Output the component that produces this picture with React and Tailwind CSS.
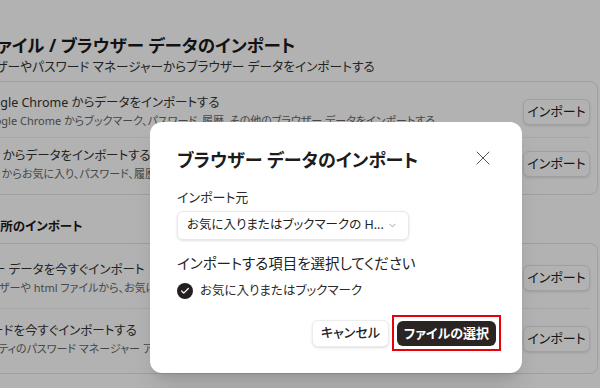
import React from 'react'
import { X, ChevronDown, Check } from 'lucide-react'

const rows1 = [
  {
    title: 'Google Chrome からデータをインポートする',
    sub: 'Google Chrome からブックマーク、パスワード、履歴、その他のブラウザー データをインポートする',
    tOff: '',
    sOff: 'ml-[4px]',
  },
  {
    title: 'Edge からデータをインポートする',
    sub: 'Edge からお気に入り、パスワード、履歴、Cookie、その他のブラウザー データをインポートする',
    tOff: '-ml-[6px]',
    sOff: '-ml-[3px]',
  },
]

const rows2 = [
  {
    title: 'ブラウザー データを今すぐインポート',
    sub: 'ブラウザーや html ファイルから、お気に入りまたはブックマークをインポートする',
    tOff: '-ml-[28px]',
    sOff: '-ml-[6px]',
  },
  {
    title: 'パスワードを今すぐインポートする',
    sub: 'サードパーティのパスワード マネージャー アプリからパスワードをインポートする',
    tOff: '-ml-[19px]',
    sOff: '-ml-[29px]',
  },
]

function Row({ row, h }) {
  return (
    <div className={`flex items-center justify-between ${h}`}>
      <div className="flex flex-col min-w-0">
        <div className={`text-[12.5px] leading-[18px] text-[#333] whitespace-nowrap ${row.tOff}`}>{row.title}</div>
        <div className={`text-[11px] leading-[17px] text-[#666] whitespace-nowrap ${row.sOff}`}>{row.sub}</div>
      </div>
      <button className="shrink-0 w-[67px] h-[26px] rounded-md border border-[#e6e6e6] bg-white shadow-sm text-[13px] text-[#222]">
        インポート
      </button>
    </div>
  )
}

export default function App() {
  return (
    <div className="relative w-[600px] h-[388px] overflow-hidden bg-white font-['Noto_Sans','Noto_Sans_CJK_JP',sans-serif] [font-feature-settings:'palt']">
      {/* settings page behind */}
      <div className="-ml-[39px] w-[637px] pt-[33px]">
        <h1 className="ml-[21px] text-[17.5px] leading-[24px] font-bold text-[#1a1a1a] whitespace-nowrap">
          ファイル / ブラウザー データのインポート
        </h1>
        <p className="ml-[1px] text-[12.7px] leading-[18px] text-[#333] whitespace-nowrap">
          ブラウザーやパスワード マネージャーからブラウザー データをインポートする
        </p>
        <div className="mt-[6px] rounded-lg border border-[#e4e4e4] bg-white py-[4px] pl-[14px] pr-[7px]">
          <Row row={rows1[0]} h="h-[52px] border-b border-[#f0f0f0]" />
          <Row row={rows1[1]} h="h-[52px]" />
        </div>
        <h2 className="mt-[23px] ml-[2px] text-[12.5px] leading-[18px] font-bold text-[#1a1a1a] whitespace-nowrap">
          他の場所のインポート
        </h2>
        <div className="mt-[7px] rounded-lg border border-[#e4e4e4] bg-white py-[4px] pl-[14px] pr-[7px]">
          <Row row={rows2[0]} h="h-[61px] border-b border-[#f0f0f0]" />
          <Row row={rows2[1]} h="h-[60px]" />
        </div>
      </div>

      {/* overlay */}
      <div className="absolute inset-0 bg-black/30" />

      {/* dialog */}
      <div className="absolute left-[150px] top-[122px] w-[372px] rounded-xl bg-white shadow-xl px-[27px] pt-[26px] pb-[26px]">
        <div className="flex items-center justify-between">
          <h3 className="text-[18px] leading-[24px] font-bold text-[#1c1c1c]">ブラウザー データのインポート</h3>
          <button className="-mt-[4px] text-[#555]">
            <X size={24} strokeWidth={1} />
          </button>
        </div>
        <div className="mt-[15px] text-[13px] leading-[20px] text-[#2a2a2a]">インポート元</div>
        <div className="mt-[4px] flex items-center justify-between w-[232px] h-[29px] rounded-md border border-[#e8e8e8] shadow-sm pl-[9px] pr-[10px]">
          <span className="text-[12.5px] text-[#222] whitespace-nowrap">お気に入りまたはブックマークの H...</span>
          <ChevronDown size={11} strokeWidth={1.5} className="text-[#777]" />
        </div>
        <div className="mt-[12px] text-[14.5px] leading-[22px] text-[#222]">インポートする項目を選択してください</div>
        <div className="mt-[8px] flex items-center gap-[7px]">
          <span className="flex items-center justify-center w-[16px] h-[16px] rounded-full bg-[#231f1e]">
            <Check size={10} strokeWidth={3} className="text-white" />
          </span>
          <span className="text-[12.5px] leading-[18px] text-[#2a2a2a]">お気に入りまたはブックマーク</span>
        </div>
        <div className="mt-[19px] flex items-center justify-end gap-[3px]">
          <button className="w-[77px] h-[27px] rounded-md border border-[#ececec] bg-white shadow-sm text-[13px] font-medium text-[#222]">
            キャンセル
          </button>
          <div className="-mr-[6px] -my-[4px] border-2 border-[#e8000b] p-[3px]">
            <button className="w-[99px] h-[25px] rounded-md bg-[#2a2422] text-[13px] font-bold text-white">
              ファイルの選択
            </button>
          </div>
        </div>
      </div>
    </div>
  )
}
